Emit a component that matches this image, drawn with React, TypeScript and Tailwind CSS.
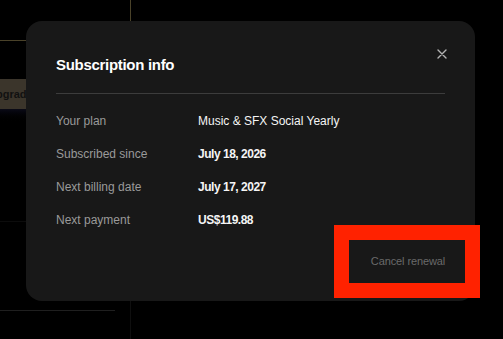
import React from 'react';

const rows = [
  { label: 'Your plan', value: 'Music & SFX Social Yearly', strong: false },
  { label: 'Subscribed since', value: 'July 18, 2026', strong: true },
  { label: 'Next billing date', value: 'July 17, 2027', strong: true },
  { label: 'Next payment', value: 'US$119.88', strong: true },
];

const App: React.FC = () => {
  return (
    <div className="relative w-[503px] h-[339px] overflow-hidden bg-black font-['Liberation_Sans',Arial,sans-serif]">
      {/* page behind the dialog */}
      <div className="flex h-full w-[131px] flex-col border-r border-[#0f0f0f]">
        <div className="h-[41px] w-[131px] shrink-0 border-b border-r border-[#4a4229]" />
        <div className="mt-[38px] -ml-[20px] flex h-[30px] items-center bg-[#3b352b] px-2 text-[11px] font-bold text-[#111]">
          Upgrade
        </div>
        <div className="h-[14px] bg-gradient-to-b from-[#0b0b17] to-black" />
        <div className="mt-[98px] border-b border-[#0c0c0c]" />
        <div className="mt-[88px] w-[115px] border-b border-[#1f1f1f]" />
      </div>

      {/* dialog */}
      <div className="absolute left-[26px] top-[21px] flex h-[280px] w-[449px] flex-col rounded-2xl bg-[#181818] px-[30px] pt-[34px] text-[12px]">
        <button className="absolute left-[411px] top-[28px] text-[#b3b3b3]">
          <svg width="10" height="10" viewBox="0 0 10 10" fill="none" stroke="currentColor" strokeWidth="1.4" strokeLinecap="round">
            <path d="M1 1l8 8M9 1l-8 8" />
          </svg>
        </button>
        <h2 className="text-[15px] font-bold leading-5 tracking-[-0.02em] text-white">Subscription info</h2>
        <div className="mt-[18px] border-t border-[#3c3c3c]" />
        <div className="mt-[19px] flex flex-col gap-[17px]">
          {rows.map((row) => (
            <div key={row.label} className="flex leading-4">
              <span className="w-[142px] text-[#9a9a9a]">{row.label}</span>
              <span
                className={
                  row.strong
                    ? 'font-bold tracking-[-0.04em] text-[#f5f5f5]'
                    : 'font-medium text-[#f5f5f5]'
                }
              >
                {row.value}
              </span>
            </div>
          ))}
        </div>
        <div className="mt-[12px] -mr-[21px] flex justify-end">
          <button className="flex h-[43px] w-[116px] items-center justify-center text-[11px] tracking-[-0.01em] text-[#6a6a6a]">
            Cancel renewal
          </button>
        </div>
      </div>

      {/* annotation */}
      <div className="absolute left-[334px] top-[225px] h-[73px] w-[146px] border-[15px] border-[#ff2200]" />
    </div>
  );
};

export default App;
